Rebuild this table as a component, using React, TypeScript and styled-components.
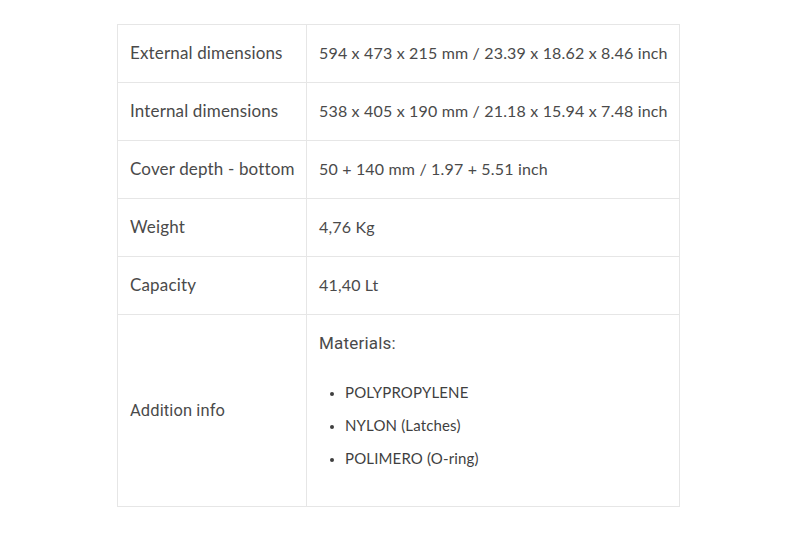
import React from "react";
import styled, { createGlobalStyle } from "styled-components";

const Global = createGlobalStyle`
  html, body { margin: 0; padding: 0; background: #fff; }
  body { font-family: "Lato", "Liberation Sans", sans-serif; color: #444; }
`;

const Page = styled.div`
  padding: 24px 0 0 117px;
`;

const Table = styled.table`
  width: 563px;
  border-collapse: collapse;
  border: 1px solid #e6e6e6;
  table-layout: fixed;
`;

const Row = styled.tr<{ $h?: number }>`
  height: ${(p) => p.$h ?? 58}px;
`;

const Label = styled.td`
  width: 189px;
  box-sizing: border-box;
  border: 1px solid #e6e6e6;
  padding: 0 12px 2px 12px;
  font-size: 17px;
  letter-spacing: 0.15px;
  color: #4a4a4a;
  vertical-align: middle;
  white-space: nowrap;
`;

const Value = styled.td`
  border: 1px solid #e6e6e6;
  padding: 0 12px 2px 12px;
  font-size: 16px;
  letter-spacing: 0.17px;
  color: #4a4a4a;
  vertical-align: middle;
  white-space: nowrap;
`;

const InfoLabel = styled(Label)`
  font-family: "Roboto", "Liberation Sans", sans-serif;
  font-size: 16.5px;
  letter-spacing: 0.1px;
  padding-bottom: 0;
`;

const InfoCell = styled(Value)`
  vertical-align: top;
  padding: 15px 12px 0 12px;
`;

const Heading = styled.p`
  margin: 0;
  font-family: "Roboto", "Liberation Sans", sans-serif;
  font-size: 17px;
  letter-spacing: 0.2px;
  line-height: 26px;
  color: #4a4a4a;
`;

const List = styled.ul`
  margin: 20px 0 0 0;
  padding: 0 0 0 26px;
  list-style: disc;
`;

const Item = styled.li`
  font-size: 15px;
  letter-spacing: 0.15px;
  line-height: 33px;
  color: #3f3f3f;
  padding-left: 0;
  &::marker { font-size: 13px; }
`;

const rows: [string, string][] = [
  ["External dimensions", "594 x 473 x 215 mm / 23.39 x 18.62 x 8.46 inch"],
  ["Internal dimensions", "538 x 405 x 190 mm / 21.18 x 15.94 x 7.48 inch"],
  ["Cover depth - bottom", "50 + 140 mm / 1.97 + 5.51 inch"],
  ["Weight", "4,76 Kg"],
  ["Capacity", "41,40 Lt"],
];

export default function App() {
  return (
    <>
      <Global />
      <Page>
        <Table>
          <tbody>
            {rows.map(([k, v]) => (
              <Row key={k}>
                <Label>{k}</Label>
                <Value>{v}</Value>
              </Row>
            ))}
            <Row $h={192}>
              <InfoLabel>Addition info</InfoLabel>
              <InfoCell>
                <Heading>Materials:</Heading>
                <List>
                  <Item>POLYPROPYLENE</Item>
                  <Item>NYLON (Latches)</Item>
                  <Item>POLIMERO (O-ring)</Item>
                </List>
              </InfoCell>
            </Row>
          </tbody>
        </Table>
      </Page>
    </>
  );
}
